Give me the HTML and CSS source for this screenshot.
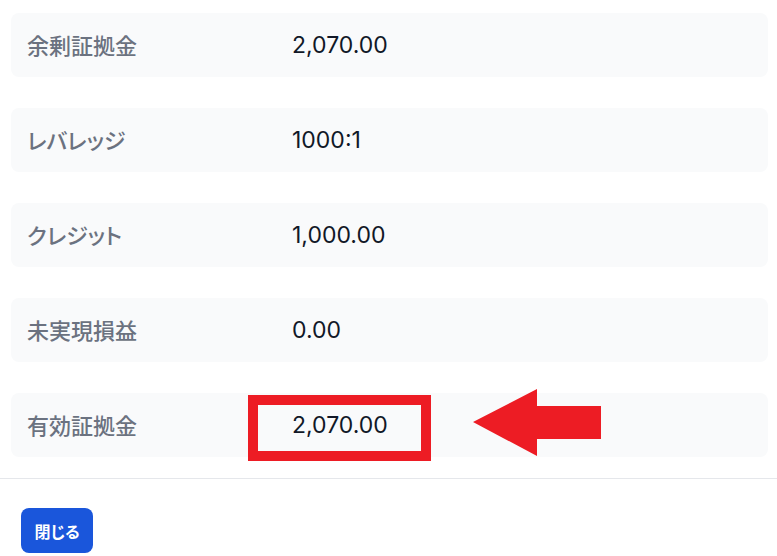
FILE: index.html
```html
<!DOCTYPE html>
<html lang="ja">
<head>
<meta charset="utf-8">
<title>口座情報</title>
<link rel="stylesheet" href="styles.css">
</head>
<body>
<div class="list">
  <div class="row"><span class="label">余剰証拠金</span><span class="value">2,070.00</span></div>
  <div class="row"><span class="label">レバレッジ</span><span class="value">1000:1</span></div>
  <div class="row"><span class="label">クレジット</span><span class="value">1,000.00</span></div>
  <div class="row"><span class="label">未実現損益</span><span class="value">0.00</span></div>
  <div class="row highlight">
    <span class="label">有効証拠金</span><span class="value">2,070.00</span>
    <span class="mark-box"></span>
    <svg class="mark-arrow" width="128" height="67" viewBox="0 0 128 67"><polygon points="0,33 64,0 64,17 128,17 128,50 64,50 64,67" fill="#ed1c24"/></svg>
  </div>
</div>
<div class="footer">
  <button class="close-btn">閉じる</button>
</div>
</body>
</html>
```
FILE: styles.css
```css
html, body {
  margin: 0;
  padding: 0;
  background: #ffffff;
}
body {
  font-family: Inter, "Noto Sans CJK JP", sans-serif;
  width: 777px;
  height: 556px;
  overflow: hidden;
}
.list {
  display: flex;
  flex-direction: column;
  gap: 31px;
  padding: 13px 9px 21px 11px;
  border-bottom: 1px solid #e5e7eb;
}
.row {
  position: relative;
  display: flex;
  align-items: center;
  height: 64px;
  padding: 0 16px;
  background: #f9fafb;
  border-radius: 8px;
}
.label {
  width: 265px;
  flex: none;
  font-family: "Noto Sans CJK JP", sans-serif;
  font-feature-settings: "palt";
  font-size: 22px;
  line-height: 1;
  margin-top: -3px;
  font-weight: 500;
  color: #6b7280;
}
.value {
  font-family: Inter, sans-serif;
  font-size: 23px;
  line-height: 1;
  color: #111827;
}
.mark-box {
  position: absolute;
  left: 237px;
  top: 2px;
  width: 163px;
  height: 46px;
  border: 10px solid #ed1c24;
}
.mark-arrow {
  position: absolute;
  left: 462px;
  top: -4px;
}
.footer {
  padding: 29px 0 0 21px;
}
.close-btn {
  height: 45px;
  width: 72px;
  padding: 0;
  border: none;
  border-radius: 8px;
  background: #1a56db;
  color: #ffffff;
  font-family: "Noto Sans CJK JP", sans-serif;
  font-feature-settings: "palt";
  font-size: 16px;
  font-weight: 700;
}
```
